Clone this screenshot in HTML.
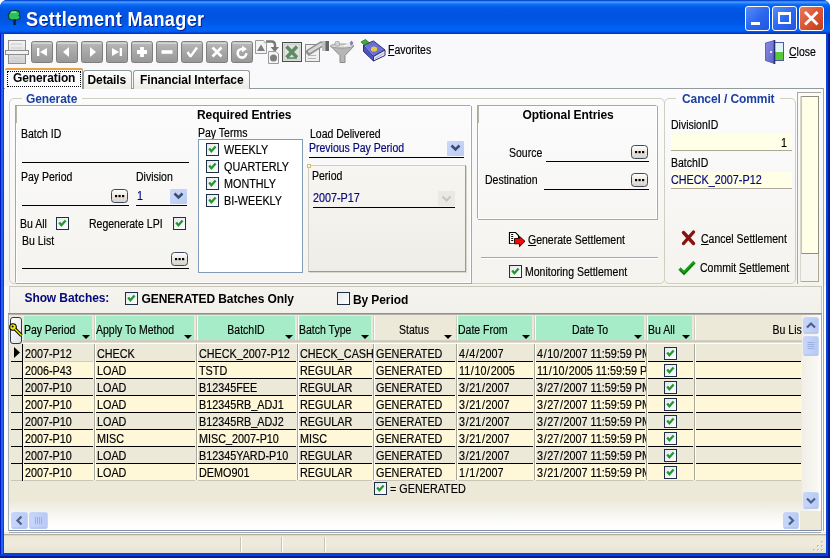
<!DOCTYPE html>
<html><head><meta charset="utf-8"><style>
html,body{margin:0;padding:0;}
body{width:830px;height:558px;overflow:hidden;position:relative;background:#fff;font-family:"Liberation Sans",sans-serif;will-change:transform;}
body div{position:absolute;box-sizing:border-box;}
svg{overflow:visible}
</style></head><body>
<svg width="0" height="0" style="position:absolute"><defs>
<linearGradient id="cbg" x1="0" y1="0" x2="1" y2="1"><stop offset="0" stop-color="#E6E6F0"/><stop offset="1" stop-color="#FFFFFF"/></linearGradient>
<linearGradient id="ebg" x1="0" y1="0" x2="0" y2="1"><stop offset="0" stop-color="#FFFFFF"/><stop offset="1" stop-color="#D6D0C5"/></linearGradient>
<linearGradient id="dbg" x1="0" y1="0" x2="1" y2="1"><stop offset="0" stop-color="#CCD8F8"/><stop offset="1" stop-color="#BACCF4"/></linearGradient>
<linearGradient id="nbg" x1="0" y1="0" x2="0" y2="1"><stop offset="0" stop-color="#D2D2D2"/><stop offset="0.15" stop-color="#B4B4B4"/><stop offset="0.6" stop-color="#A4A4A4"/><stop offset="1" stop-color="#979797"/></linearGradient>
<linearGradient id="hbg" x1="0" y1="0" x2="1" y2="1"><stop offset="0" stop-color="#FFFFFF"/><stop offset="0.6" stop-color="#ECEEF2"/><stop offset="1" stop-color="#DCE2EA"/></linearGradient>
<linearGradient id="sbg" x1="0" y1="0" x2="1" y2="0"><stop offset="0" stop-color="#C8D6FB"/><stop offset="1" stop-color="#B7CAF5"/></linearGradient>
</defs></svg>

<div style="left:0px;top:0px;width:830px;height:558px;background:#0842D6;border-radius:7px 7px 0 0;"></div>
<div style="left:0px;top:0px;width:830px;height:34px;border-radius:7px 7px 0 0;background:linear-gradient(#0846D0 0px,#0A50D8 1px,#3A93FF 1.6px,#3D95FF 2.6px,#1370F6 4px,#0560F0 6px,#0057E6 9px,#0053E0 16px,#0056E6 22px,#0062F6 28px,#0060F4 31px,#0046D4 32.5px,#0030B0 34px);"></div>
<div style="left:0px;top:34px;width:1px;height:524px;background:#0018C0;"></div>
<div style="left:1px;top:34px;width:2px;height:522px;background:#1E62F0;"></div>
<div style="left:826px;top:34px;width:2px;height:522px;background:#0842DA;"></div>
<div style="left:828px;top:34px;width:2px;height:524px;background:#001C98;"></div>
<div style="left:0px;top:554px;width:828px;height:2px;background:#0842DA;"></div>
<div style="left:0px;top:556px;width:830px;height:2px;background:#001C98;"></div>
<div style="left:4px;top:34px;width:822px;height:519px;background:#ECE9D8;"></div>
<div style="left:4px;top:34px;width:822px;height:55px;background:#F9F9FC;"></div>
<svg style="position:absolute;left:6px;top:9px" width="17" height="17" viewBox="0 0 17 17"><path d="M3.5 4 Q4 1.5 8 1.8 Q12.5 1 13.5 3.5 Q14.5 5.5 13 6.5 Q15.5 8.5 12.5 10.5 Q9 11.5 5 10.8 Q2 10 2.8 8 Q1.5 6 3.5 4 Z" fill="#2DBE5E" stroke="#0D3A1E" stroke-width="1.1"/><path d="M5 3.5 Q8 2.5 10.5 3.5" stroke="#6CF09A" stroke-width="1.6" fill="none"/><rect x="7.5" y="10.5" width="2.2" height="5.5" fill="#0A1A3A"/></svg>
<div style="left:26px;top:9.07px;font-size:20px;line-height:20px;font-weight:bold;color:#fff;white-space:nowrap;text-shadow:1px 1px 0 #0A1E8C;letter-spacing:0.4px;transform:scaleX(0.905);transform-origin:0 0;">Settlement Manager</div>
<div style="left:745px;top:6px;width:25px;height:25px;border:1px solid #fff;border-radius:3px;background:linear-gradient(135deg,#5A8DF7,#2D68F0 50%,#2156DD);"></div>
<div style="left:772px;top:6px;width:25px;height:25px;border:1px solid #fff;border-radius:3px;background:linear-gradient(135deg,#5A8DF7,#2D68F0 50%,#2156DD);"></div>
<div style="left:799px;top:6px;width:25px;height:25px;border:1px solid #fff;border-radius:3px;background:linear-gradient(135deg,#E8795E,#D8532F 55%,#C23E1C);"></div>
<div style="left:751px;top:22px;width:9px;height:3px;background:#fff;"></div>
<div style="left:778px;top:12px;width:13px;height:12px;border:2px solid #fff;border-top-width:3px;"></div>
<svg style="position:absolute;left:803px;top:10px" width="17" height="17" viewBox="0 0 17 17"><path d="M2 2 L14.5 14.5 M14.5 2 L2 14.5" stroke="#fff" stroke-width="2.8"/></svg>
<svg style="position:absolute;left:5px;top:40px" width="25" height="24" viewBox="0 0 25 24"><defs><linearGradient id="rsg" x1="0" y1="0" x2="0" y2="1"><stop offset="0" stop-color="#F4F4F4"/><stop offset="1" stop-color="#D0D0D0"/></linearGradient></defs><rect x="3.5" y="0.5" width="17" height="23" fill="url(#rsg)" stroke="#8E8E8E"/><rect x="0.5" y="10.5" width="23" height="4" fill="#F2F2F2" stroke="#8E8E8E"/><path d="M6 4h11M6 8h11M6 18h11M6 21h11" stroke="#CACACA"/></svg>
<svg style="position:absolute;left:31px;top:41px" width="22" height="22" viewBox="0 0 22 22"><rect x="0.5" y="0.5" width="21" height="21" rx="2" fill="url(#nbg)" stroke="#7E7E7E"/><path d="M2 2.5 H20" stroke="#DADADA" stroke-opacity="0.8"/><rect x="6" y="7" width="2.3" height="8" fill="#fff"/><path d="M9 11 L16 7 V15 Z" fill="#fff"/></svg>
<svg style="position:absolute;left:56px;top:41px" width="22" height="22" viewBox="0 0 22 22"><rect x="0.5" y="0.5" width="21" height="21" rx="2" fill="url(#nbg)" stroke="#7E7E7E"/><path d="M2 2.5 H20" stroke="#DADADA" stroke-opacity="0.8"/><path d="M7 11 L13 6 V16 Z" fill="#fff"/></svg>
<svg style="position:absolute;left:81px;top:41px" width="22" height="22" viewBox="0 0 22 22"><rect x="0.5" y="0.5" width="21" height="21" rx="2" fill="url(#nbg)" stroke="#7E7E7E"/><path d="M2 2.5 H20" stroke="#DADADA" stroke-opacity="0.8"/><path d="M15 11 L9 6 V16 Z" fill="#fff"/></svg>
<svg style="position:absolute;left:106px;top:41px" width="22" height="22" viewBox="0 0 22 22"><rect x="0.5" y="0.5" width="21" height="21" rx="2" fill="url(#nbg)" stroke="#7E7E7E"/><path d="M2 2.5 H20" stroke="#DADADA" stroke-opacity="0.8"/><rect x="13.7" y="7" width="2.3" height="8" fill="#fff"/><path d="M13 11 L6 7 V15 Z" fill="#fff"/></svg>
<svg style="position:absolute;left:131px;top:41px" width="22" height="22" viewBox="0 0 22 22"><rect x="0.5" y="0.5" width="21" height="21" rx="2" fill="url(#nbg)" stroke="#7E7E7E"/><path d="M2 2.5 H20" stroke="#DADADA" stroke-opacity="0.8"/><path d="M11 6 V16 M6 11 H16" stroke="#fff" stroke-width="3.8"/></svg>
<svg style="position:absolute;left:156px;top:41px" width="22" height="22" viewBox="0 0 22 22"><rect x="0.5" y="0.5" width="21" height="21" rx="2" fill="url(#nbg)" stroke="#7E7E7E"/><path d="M2 2.5 H20" stroke="#DADADA" stroke-opacity="0.8"/><path d="M5.5 11 H16.5" stroke="#fff" stroke-width="3.6"/></svg>
<svg style="position:absolute;left:181px;top:41px" width="22" height="22" viewBox="0 0 22 22"><rect x="0.5" y="0.5" width="21" height="21" rx="2" fill="url(#nbg)" stroke="#7E7E7E"/><path d="M2 2.5 H20" stroke="#DADADA" stroke-opacity="0.8"/><path d="M6.5 11 L9.5 15.5 L16 6.5" stroke="#fff" stroke-width="2.4" fill="none" stroke-linejoin="bevel"/></svg>
<svg style="position:absolute;left:206px;top:41px" width="22" height="22" viewBox="0 0 22 22"><rect x="0.5" y="0.5" width="21" height="21" rx="2" fill="url(#nbg)" stroke="#7E7E7E"/><path d="M2 2.5 H20" stroke="#DADADA" stroke-opacity="0.8"/><path d="M6.5 6.5 L15.5 15.5 M15.5 6.5 L6.5 15.5" stroke="#fff" stroke-width="2.6"/></svg>
<svg style="position:absolute;left:231px;top:41px" width="22" height="22" viewBox="0 0 22 22"><rect x="0.5" y="0.5" width="21" height="21" rx="2" fill="url(#nbg)" stroke="#7E7E7E"/><path d="M2 2.5 H20" stroke="#DADADA" stroke-opacity="0.8"/><path d="M11 8 A4.3 4.3 0 1 0 15.3 12.3" stroke="#fff" stroke-width="2.6" fill="none"/><path d="M11 4.8 L16 8 L11 11.2 Z" fill="#fff"/></svg>
<svg style="position:absolute;left:255px;top:40px" width="25" height="24" viewBox="0 0 25 24"><path d="M0.5 0.5 H8.5 L11.5 3.5 V13.5 H0.5 Z" fill="#F4F4F4" stroke="#9A9A9A"/><path d="M8.5 0.5 V3.5 H11.5 Z" fill="#D0D0D0"/><path d="M2 11 L6 4.5 L10 11 Z" fill="#7E7E7E"/><path d="M11 1.5 H16.5 Q20 1.5 20 5 V8" stroke="#787878" stroke-width="2.4" fill="none"/><path d="M15.5 7 H24 L19.8 12 Z" fill="#787878"/><path d="M13.5 11.5 H21 L23.5 14 V23.5 H13.5 Z" fill="#F4F4F4" stroke="#9A9A9A"/><circle cx="18.5" cy="18" r="3.5" fill="#7E7E7E"/></svg>
<svg style="position:absolute;left:282px;top:42px" width="20" height="20" viewBox="0 0 20 20"><rect x="0.5" y="0.5" width="19" height="19" fill="#F4F4F2" stroke="#4A4E4A"/><rect x="2" y="2" width="16" height="16" fill="#E0E3DF" stroke="#BFC4BE"/><path d="M4.5 4.5 L15 15.5 M15 4.5 L4.5 15.5" stroke="#5F8A66" stroke-width="3.4"/><path d="M5 16 H15" stroke="#5F8A66" stroke-width="1.6"/></svg>
<svg style="position:absolute;left:304px;top:40px" width="26" height="24" viewBox="0 0 26 24"><rect x="1.5" y="4.5" width="14" height="17" fill="#EFEFEF" stroke="#888"/><path d="M4 15.5h8M4 18.5h8" stroke="#B4B4B4"/><path d="M5 12 L17 4.5" stroke="#8E8E8E" stroke-width="6" stroke-linecap="round"/><path d="M5.5 11.5 L17 4.5" stroke="#D6D6D6" stroke-width="3" stroke-linecap="round"/><rect x="18" y="1" width="7" height="10" fill="#BDBDBD"/><rect x="21.5" y="1" width="3.5" height="10" fill="#666"/></svg>
<svg style="position:absolute;left:330px;top:40px" width="26" height="24" viewBox="0 0 26 24"><path d="M0.5 6 H24 L15 15.5 V22.5 H10 V15.5 Z" fill="#B6B6B6" stroke="#8A8A8A"/><ellipse cx="12.2" cy="6" rx="11.7" ry="2" fill="#DEDEDE" stroke="#9A9A9A"/><rect x="5" y="1.5" width="4.5" height="4.5" rx="1.5" fill="#D4D4D4" stroke="#A0A0A0" stroke-width="0.8"/><path d="M14 6 L20 4" stroke="#F4F4F4" stroke-width="1.5"/><path d="M21.5 0.5 L23.5 3 L21.5 5.5 L19.5 3 Z" fill="#8A7CC0"/></svg>
<svg style="position:absolute;left:356px;top:34px" width="34" height="32" viewBox="0 0 34 32"><path d="M7.5 11 L17.5 7 L29 16 L17.5 22.5 Z" fill="#6B6FD6" stroke="#2C2F80" stroke-width="1"/><path d="M7.5 11 L17.5 22.5 L17.5 27 L7.5 17.5 Z" fill="#5155BE" stroke="#2C2F80" stroke-width="1"/><path d="M17.5 22.5 L29 16 L29 21.5 L17.5 27 Z" fill="#E4E4EE" stroke="#2C2F80" stroke-width="1"/><path d="M19 24.5 L27.5 19.5" stroke="#B0B0C8"/><path d="M5 8 L9.5 5.5 L13 8.5 L8.5 11 Z" fill="#3BB03B" stroke="#1E6E1E" stroke-width="0.8"/><ellipse cx="18" cy="15" rx="3.2" ry="2.6" fill="#E8C840"/><path d="M9 12 L17 21" stroke="#8D91E8" stroke-width="1"/></svg>
<div style="left:388.3px;top:43.84px;font-size:12px;line-height:12px;font-weight:normal;color:#000;white-space:nowrap;transform:scaleX(0.875);transform-origin:0 0;-webkit-text-stroke:0.18px currentColor;"><u>F</u>avorites</div>
<svg style="position:absolute;left:765px;top:40px" width="20" height="24" viewBox="0 0 20 24"><defs><linearGradient id="drg" x1="0" y1="0" x2="1" y2="1"><stop offset="0" stop-color="#8A8CE8"/><stop offset="1" stop-color="#5E62C8"/></linearGradient></defs><rect x="9.5" y="2.5" width="9" height="18" fill="#DDF4FA" stroke="#4E5AA0"/><rect x="10" y="12" width="8" height="8" fill="#58C83A"/><path d="M0.5 3 L9.5 0.5 V23.5 L0.5 20.5 Z" fill="url(#drg)" stroke="#4A50A8" stroke-width="0.8"/><path d="M9.5 0 V24" stroke="#283070" stroke-width="1.6"/><circle cx="6" cy="12" r="1.1" fill="#fff"/></svg>
<div style="left:789.3px;top:45.64px;font-size:12px;line-height:12px;font-weight:normal;color:#000;white-space:nowrap;transform:scaleX(0.875);transform-origin:0 0;-webkit-text-stroke:0.18px currentColor;"><u>C</u>lose</div>
<div style="left:4px;top:88px;width:822px;height:226px;background:linear-gradient(#FCFCFE,#F4F3EE 200px,#F1F0EA);"></div>
<div style="left:4px;top:88px;width:820px;height:1px;background:#919B9C;"></div>
<div style="left:83px;top:70px;width:49px;height:19px;border:1px solid #919B9C;border-bottom:none;border-radius:3px 3px 0 0;background:linear-gradient(#FFFFFF,#ECEBE6);"></div>
<div style="left:133px;top:70px;width:117px;height:19px;border:1px solid #919B9C;border-bottom:none;border-radius:3px 3px 0 0;background:linear-gradient(#FFFFFF,#ECEBE6);"></div>
<div style="left:5px;top:68px;width:78px;height:21px;border-right:1px solid #919B9C;border-radius:3px 3px 0 0;background:#FCFCFE;"></div>
<div style="left:5px;top:68px;width:78px;height:2px;background:#E8A040;border-radius:2px 2px 0 0;"></div>
<div style="left:7px;top:71px;width:74px;height:16px;border:1px dotted #000;"></div>
<div style="left:13px;top:71.84px;font-size:12px;line-height:12px;font-weight:bold;color:#000;white-space:nowrap;letter-spacing:-0.1px;">Generation</div>
<div style="left:87.5px;top:73.84px;font-size:12px;line-height:12px;font-weight:bold;color:#000;white-space:nowrap;letter-spacing:-0.1px;">Details</div>
<div style="left:140px;top:73.84px;font-size:12px;line-height:12px;font-weight:bold;color:#000;white-space:nowrap;letter-spacing:-0.1px;">Financial Interface</div>
<div style="left:9px;top:98px;width:656px;height:186px;border:1px solid #D0D0BF;border-radius:5px;"></div>
<div style="left:22px;top:90px;width:60px;height:14px;background:#FCFCFE;"></div>
<div style="left:26px;top:92.84px;font-size:12px;line-height:12px;font-weight:bold;color:#1A3FA0;white-space:nowrap;letter-spacing:-0.1px;">Generate</div>
<div style="left:15px;top:105px;width:456px;height:178px;border:1px solid #ACA899;border-right-color:#fff;border-bottom-color:#fff;box-shadow:1px 1px 0 #ACA899, inset 1px 1px 0 #fff;"></div>
<div style="left:16px;top:106px;width:1px;height:17px;background:#B8B4A6;"></div>
<div style="left:197px;top:108.84px;font-size:12px;line-height:12px;font-weight:bold;color:#000;white-space:nowrap;letter-spacing:-0.1px;">Required Entries</div>
<div style="left:21.3px;top:127.84px;font-size:12px;line-height:12px;font-weight:normal;color:#000;white-space:nowrap;transform:scaleX(0.875);transform-origin:0 0;-webkit-text-stroke:0.18px currentColor;">Batch ID</div>
<div style="left:22px;top:162px;width:167px;height:1px;background:#000;"></div>
<div style="left:20.8px;top:170.84px;font-size:12px;line-height:12px;font-weight:normal;color:#000;white-space:nowrap;transform:scaleX(0.875);transform-origin:0 0;-webkit-text-stroke:0.18px currentColor;">Pay Period</div>
<div style="left:136.3px;top:170.84px;font-size:12px;line-height:12px;font-weight:normal;color:#000;white-space:nowrap;transform:scaleX(0.875);transform-origin:0 0;-webkit-text-stroke:0.18px currentColor;">Division</div>
<svg style="position:absolute;left:111px;top:189px" width="17" height="14" viewBox="0 0 17 14"><rect x="0.5" y="0.5" width="16" height="13" rx="3" fill="url(#ebg)" stroke="#3A4A5C"/><rect x="4.0" y="6.0" width="2.2" height="2.2" fill="#000"/><rect x="7.5" y="6.0" width="2.2" height="2.2" fill="#000"/><rect x="11.0" y="6.0" width="2.2" height="2.2" fill="#000"/></svg>
<div style="left:22px;top:205px;width:107px;height:1px;background:#000;"></div>
<div style="left:137.3px;top:189.84px;font-size:12px;line-height:12px;font-weight:normal;color:#06087A;white-space:nowrap;transform:scaleX(0.9);transform-origin:0 0;-webkit-text-stroke:0.18px currentColor;">1</div>
<svg style="position:absolute;left:170px;top:189px" width="17" height="15" viewBox="0 0 17 15"><rect x="0" y="0" width="17" height="15" rx="1" fill="url(#dbg)"/><path d="M4.5 4.5 L8.5 8.5 L12.5 4.5" stroke="#3C4C74" stroke-width="2.5" fill="none"/></svg>
<div style="left:136px;top:205px;width:51px;height:1px;background:#000;"></div>
<div style="left:19.8px;top:218.34px;font-size:12px;line-height:12px;font-weight:normal;color:#000;white-space:nowrap;transform:scaleX(0.875);transform-origin:0 0;-webkit-text-stroke:0.18px currentColor;">Bu All</div>
<svg style="position:absolute;left:56px;top:217px" width="13" height="13" viewBox="0 0 13 13"><rect x="0.5" y="0.5" width="12" height="12" fill="url(#cbg)" stroke="#1E2E44"/><path d="M3.2 5.6 L5.4 8.3 L9.6 3.6" stroke="#21982A" stroke-width="2.3" fill="none"/></svg>
<div style="left:89.3px;top:218.34px;font-size:12px;line-height:12px;font-weight:normal;color:#000;white-space:nowrap;transform:scaleX(0.875);transform-origin:0 0;-webkit-text-stroke:0.18px currentColor;">Regenerate LPI</div>
<svg style="position:absolute;left:173px;top:217px" width="13" height="13" viewBox="0 0 13 13"><rect x="0.5" y="0.5" width="12" height="12" fill="url(#cbg)" stroke="#1E2E44"/><path d="M3.2 5.6 L5.4 8.3 L9.6 3.6" stroke="#21982A" stroke-width="2.3" fill="none"/></svg>
<div style="left:21.8px;top:235.34px;font-size:12px;line-height:12px;font-weight:normal;color:#000;white-space:nowrap;transform:scaleX(0.875);transform-origin:0 0;-webkit-text-stroke:0.18px currentColor;">Bu List</div>
<svg style="position:absolute;left:171px;top:252px" width="17" height="14" viewBox="0 0 17 14"><rect x="0.5" y="0.5" width="16" height="13" rx="3" fill="url(#ebg)" stroke="#3A4A5C"/><rect x="4.0" y="6.0" width="2.2" height="2.2" fill="#000"/><rect x="7.5" y="6.0" width="2.2" height="2.2" fill="#000"/><rect x="11.0" y="6.0" width="2.2" height="2.2" fill="#000"/></svg>
<div style="left:22px;top:268px;width:167px;height:1px;background:#000;"></div>
<div style="left:197.8px;top:127.34px;font-size:12px;line-height:12px;font-weight:normal;color:#000;white-space:nowrap;transform:scaleX(0.875);transform-origin:0 0;-webkit-text-stroke:0.18px currentColor;">Pay Terms</div>
<div style="left:198px;top:139px;width:105px;height:134px;border:1px solid #7F9DB9;background:#fff;"></div>
<svg style="position:absolute;left:206px;top:143px" width="13" height="13" viewBox="0 0 13 13"><rect x="0.5" y="0.5" width="12" height="12" fill="url(#cbg)" stroke="#1E2E44"/><path d="M3.2 5.6 L5.4 8.3 L9.6 3.6" stroke="#21982A" stroke-width="2.3" fill="none"/></svg>
<div style="left:224.3px;top:143.84px;font-size:12px;line-height:12px;font-weight:normal;color:#000;white-space:nowrap;transform:scaleX(0.9);transform-origin:0 0;-webkit-text-stroke:0.18px currentColor;">WEEKLY</div>
<svg style="position:absolute;left:206px;top:160px" width="13" height="13" viewBox="0 0 13 13"><rect x="0.5" y="0.5" width="12" height="12" fill="url(#cbg)" stroke="#1E2E44"/><path d="M3.2 5.6 L5.4 8.3 L9.6 3.6" stroke="#21982A" stroke-width="2.3" fill="none"/></svg>
<div style="left:224.3px;top:160.84px;font-size:12px;line-height:12px;font-weight:normal;color:#000;white-space:nowrap;transform:scaleX(0.9);transform-origin:0 0;-webkit-text-stroke:0.18px currentColor;">QUARTERLY</div>
<svg style="position:absolute;left:206px;top:177px" width="13" height="13" viewBox="0 0 13 13"><rect x="0.5" y="0.5" width="12" height="12" fill="url(#cbg)" stroke="#1E2E44"/><path d="M3.2 5.6 L5.4 8.3 L9.6 3.6" stroke="#21982A" stroke-width="2.3" fill="none"/></svg>
<div style="left:224.3px;top:177.84px;font-size:12px;line-height:12px;font-weight:normal;color:#000;white-space:nowrap;transform:scaleX(0.9);transform-origin:0 0;-webkit-text-stroke:0.18px currentColor;">MONTHLY</div>
<svg style="position:absolute;left:206px;top:194px" width="13" height="13" viewBox="0 0 13 13"><rect x="0.5" y="0.5" width="12" height="12" fill="url(#cbg)" stroke="#1E2E44"/><path d="M3.2 5.6 L5.4 8.3 L9.6 3.6" stroke="#21982A" stroke-width="2.3" fill="none"/></svg>
<div style="left:224.3px;top:194.84px;font-size:12px;line-height:12px;font-weight:normal;color:#000;white-space:nowrap;transform:scaleX(0.9);transform-origin:0 0;-webkit-text-stroke:0.18px currentColor;">BI-WEEKLY</div>
<div style="left:309.8px;top:127.84px;font-size:12px;line-height:12px;font-weight:normal;color:#000;white-space:nowrap;transform:scaleX(0.875);transform-origin:0 0;-webkit-text-stroke:0.18px currentColor;">Load Delivered</div>
<div style="left:308.8px;top:141.84px;font-size:12px;line-height:12px;font-weight:normal;color:#06087A;white-space:nowrap;transform:scaleX(0.875);transform-origin:0 0;-webkit-text-stroke:0.18px currentColor;">Previous Pay Period</div>
<svg style="position:absolute;left:447px;top:141px" width="17" height="15" viewBox="0 0 17 15"><rect x="0" y="0" width="17" height="15" rx="1" fill="url(#dbg)"/><path d="M4.5 4.5 L8.5 8.5 L12.5 4.5" stroke="#3C4C74" stroke-width="2.5" fill="none"/></svg>
<div style="left:309px;top:157px;width:155px;height:1px;background:#000;"></div>
<div style="left:308px;top:165px;width:158px;height:107px;border:1px solid #CFCDC3;border-right-color:#9C9A90;border-bottom-color:#9C9A90;box-shadow:1px 1px 0 #DAD8CE;background:linear-gradient(#F7F6F2,#EEEDE7);"></div>
<div style="left:307px;top:164px;width:4px;height:4px;border:1px solid #D9B878;background:#FFF8E8;"></div>
<div style="left:312.3px;top:169.84px;font-size:12px;line-height:12px;font-weight:normal;color:#000;white-space:nowrap;transform:scaleX(0.875);transform-origin:0 0;-webkit-text-stroke:0.18px currentColor;">Period</div>
<div style="left:312.8px;top:191.84px;font-size:12px;line-height:12px;font-weight:normal;color:#06087A;white-space:nowrap;transform:scaleX(0.9);transform-origin:0 0;-webkit-text-stroke:0.18px currentColor;">2007-P17</div>
<svg style="position:absolute;left:438px;top:191px" width="17" height="15" viewBox="0 0 17 15"><rect x="0" y="0" width="17" height="15" rx="1" fill="#EAEAE4" stroke="none"/><path d="M4.5 5.5 L8.5 9.5 L12.5 5.5" stroke="#C9C7BA" stroke-width="2" fill="none"/></svg>
<div style="left:313px;top:207px;width:142px;height:1px;background:#000;"></div>
<div style="left:477px;top:105px;width:180px;height:114px;border:1px solid #ACA899;border-right-color:#fff;border-bottom-color:#fff;box-shadow:1px 1px 0 #ACA899, inset 1px 1px 0 #fff;"></div>
<div style="left:478px;top:106px;width:1px;height:17px;background:#B8B4A6;"></div>
<div style="left:522.5px;top:108.84px;font-size:12px;line-height:12px;font-weight:bold;color:#000;white-space:nowrap;letter-spacing:-0.1px;">Optional Entries</div>
<div style="left:509.3px;top:146.84px;font-size:12px;line-height:12px;font-weight:normal;color:#000;white-space:nowrap;transform:scaleX(0.875);transform-origin:0 0;-webkit-text-stroke:0.18px currentColor;">Source</div>
<div style="left:546px;top:161px;width:103px;height:1px;background:#000;"></div>
<svg style="position:absolute;left:631px;top:145px" width="17" height="14" viewBox="0 0 17 14"><rect x="0.5" y="0.5" width="16" height="13" rx="3" fill="url(#ebg)" stroke="#3A4A5C"/><rect x="4.0" y="6.0" width="2.2" height="2.2" fill="#000"/><rect x="7.5" y="6.0" width="2.2" height="2.2" fill="#000"/><rect x="11.0" y="6.0" width="2.2" height="2.2" fill="#000"/></svg>
<div style="left:485.3px;top:174.34px;font-size:12px;line-height:12px;font-weight:normal;color:#000;white-space:nowrap;transform:scaleX(0.875);transform-origin:0 0;-webkit-text-stroke:0.18px currentColor;">Destination</div>
<div style="left:544px;top:189px;width:105px;height:1px;background:#000;"></div>
<svg style="position:absolute;left:631px;top:173px" width="17" height="14" viewBox="0 0 17 14"><rect x="0.5" y="0.5" width="16" height="13" rx="3" fill="url(#ebg)" stroke="#3A4A5C"/><rect x="4.0" y="6.0" width="2.2" height="2.2" fill="#000"/><rect x="7.5" y="6.0" width="2.2" height="2.2" fill="#000"/><rect x="11.0" y="6.0" width="2.2" height="2.2" fill="#000"/></svg>
<svg style="position:absolute;left:504px;top:228px" width="26" height="24" viewBox="0 0 26 24"><path d="M10.5 15.5 H5.5 V4.5 H11.5 L14.5 7.5 V10" fill="#fff" stroke="#000" stroke-width="1.2"/><rect x="6.3" y="5.3" width="5" height="10" fill="#fff"/><path d="M7.2 6.5h2M7.2 8.5h2M7.2 10.5h2M7.2 12.5h2" stroke="#000" stroke-width="1.1"/><path d="M10.5 10.5 H15.5 V8.3 L21 13.3 L15.5 18.7 V15.8 H10.5 Z" fill="#F00A0A" stroke="#1A0000" stroke-width="0.9"/></svg>
<div style="left:528.3px;top:233.84px;font-size:12px;line-height:12px;font-weight:normal;color:#000;white-space:nowrap;transform:scaleX(0.875);transform-origin:0 0;-webkit-text-stroke:0.18px currentColor;"><u>G</u>enerate Settlement</div>
<div style="left:481px;top:257px;width:177px;height:1px;background:#ACA899;"></div>
<div style="left:481px;top:258px;width:177px;height:1px;background:#fff;"></div>
<svg style="position:absolute;left:509px;top:265px" width="13" height="13" viewBox="0 0 13 13"><rect x="0.5" y="0.5" width="12" height="12" fill="url(#cbg)" stroke="#1E2E44"/><path d="M3.2 5.6 L5.4 8.3 L9.6 3.6" stroke="#21982A" stroke-width="2.3" fill="none"/></svg>
<div style="left:525.3px;top:265.84px;font-size:12px;line-height:12px;font-weight:normal;color:#000;white-space:nowrap;transform:scaleX(0.875);transform-origin:0 0;-webkit-text-stroke:0.18px currentColor;">Monitoring Settlement</div>
<div style="left:664px;top:98px;width:132px;height:186px;border:1px solid #D0D0BF;border-radius:5px;"></div>
<div style="left:676px;top:90px;width:104px;height:14px;background:#FCFCFE;"></div>
<div style="left:682px;top:92.84px;font-size:12px;line-height:12px;font-weight:bold;color:#1A3FA0;white-space:nowrap;letter-spacing:-0.1px;">Cancel / Commit</div>
<div style="left:670.8px;top:118.84px;font-size:12px;line-height:12px;font-weight:normal;color:#000;white-space:nowrap;transform:scaleX(0.875);transform-origin:0 0;-webkit-text-stroke:0.18px currentColor;">DivisionID</div>
<div style="left:671px;top:134px;width:121px;height:17px;background:#FFFFE8;border-bottom:1px solid #ACA899;"></div>
<div style="left:757.3px;width:30px;text-align:right;top:136.84px;font-size:12px;line-height:12px;font-weight:normal;color:#000;white-space:nowrap;transform:scaleX(0.9);transform-origin:100% 0;-webkit-text-stroke:0.18px currentColor;">1</div>
<div style="left:670.8px;top:156.84px;font-size:12px;line-height:12px;font-weight:normal;color:#000;white-space:nowrap;transform:scaleX(0.875);transform-origin:0 0;-webkit-text-stroke:0.18px currentColor;">BatchID</div>
<div style="left:671px;top:172px;width:121px;height:17px;background:#FFFFE8;border-bottom:1px solid #ACA899;"></div>
<div style="left:671.3px;top:174.34px;font-size:12px;line-height:12px;font-weight:normal;color:#06087A;white-space:nowrap;transform:scaleX(0.9);transform-origin:0 0;-webkit-text-stroke:0.18px currentColor;">CHECK_2007-P12</div>
<svg style="position:absolute;left:681px;top:230px" width="15" height="16" viewBox="0 0 15 16"><path d="M2.5 2.5 L12.5 13.5 M12.5 2 L2.5 13.5" stroke="#8B1010" stroke-width="3.4" stroke-linecap="round"/></svg>
<div style="left:700.8px;top:232.84px;font-size:12px;line-height:12px;font-weight:normal;color:#000;white-space:nowrap;transform:scaleX(0.875);transform-origin:0 0;-webkit-text-stroke:0.18px currentColor;"><u>C</u>ancel Settlement</div>
<svg style="position:absolute;left:678px;top:260px" width="18" height="15" viewBox="0 0 18 15"><path d="M1.5 8.5 L6 13 L16.5 2" stroke="#18A018" stroke-width="3.4" fill="none"/><path d="M2 10 L6 14 L16 3.5" stroke="#0A5F0A" stroke-width="1" fill="none"/></svg>
<div style="left:699.8px;top:262.34px;font-size:12px;line-height:12px;font-weight:normal;color:#000;white-space:nowrap;transform:scaleX(0.875);transform-origin:0 0;-webkit-text-stroke:0.18px currentColor;">Commit <u>S</u>ettlement</div>
<div style="left:797px;top:92px;width:24px;height:1px;background:#ACA899;"></div>
<div style="left:797px;top:92px;width:1px;height:192px;background:#ACA899;"></div>
<div style="left:800px;top:281px;width:19px;height:1px;background:#ACA899;"></div>
<div style="left:818px;top:96px;width:1px;height:186px;background:#ACA899;"></div>
<div style="left:800px;top:96px;width:1px;height:186px;background:#D8D6CC;"></div>
<div style="left:801px;top:96px;width:18px;height:158px;border-top:1px solid #8E8E86;border-left:1px solid #C8C6BC;border-bottom:1px solid #8E8E86;border-right:1px solid #8E8E86;background:#FFFFE8;"></div>
<div style="left:4px;top:286px;width:5px;height:247px;background:#FBFBF9;"></div>
<div style="left:821px;top:286px;width:5px;height:247px;background:#FBFBF9;"></div>
<div style="left:823px;top:88px;width:1px;height:445px;background:#A9A79C;"></div>
<div style="left:9px;top:286px;width:813px;height:28px;border-top:1px solid #C9C7BA;border-left:1px solid #D0D0BF;border-right:1px solid #C9C7BA;background:linear-gradient(#F4F3EE,#F1F0EA);"></div>
<div style="left:24.5px;top:292.34px;font-size:12px;line-height:12px;font-weight:bold;color:#06087A;white-space:nowrap;letter-spacing:-0.1px;">Show Batches:</div>
<svg style="position:absolute;left:125px;top:292px" width="13" height="13" viewBox="0 0 13 13"><rect x="0.5" y="0.5" width="12" height="12" fill="url(#cbg)" stroke="#1E2E44"/><path d="M3.2 5.6 L5.4 8.3 L9.6 3.6" stroke="#21982A" stroke-width="2.3" fill="none"/></svg>
<div style="left:141.5px;top:292.84px;font-size:12px;line-height:12px;font-weight:bold;color:#000;white-space:nowrap;letter-spacing:-0.1px;">GENERATED Batches Only</div>
<svg style="position:absolute;left:337px;top:292px" width="13" height="13" viewBox="0 0 13 13"><rect x="0.5" y="0.5" width="12" height="12" fill="url(#cbg)" stroke="#1E2E44"/></svg>
<div style="left:353px;top:293.84px;font-size:12px;line-height:12px;font-weight:bold;color:#000;white-space:nowrap;letter-spacing:-0.1px;">By Period</div>
<div style="left:8px;top:313px;width:814px;height:218px;border-left:1px solid #A5ADB8;border-right:1px solid #A5ADB8;border-bottom:1px solid #A5ADB8;background:#ECE9D8;"></div>
<div style="left:8px;top:313px;width:814px;height:1px;background:#8F8F8F;"></div>
<div style="left:8px;top:314px;width:814px;height:1px;background:#B4B2A8;"></div>
<div style="left:9px;top:530px;width:812px;height:1px;background:#7F8FA8;"></div>
<div style="left:9px;top:315px;width:793px;height:26px;background:#ECE9D8;"></div>
<svg style="position:absolute;left:10px;top:317px" width="12" height="27" viewBox="0 0 12 27"><rect x="0.5" y="0.5" width="11" height="26" rx="2.5" fill="url(#hbg)" stroke="#2E3A48"/></svg>
<svg style="position:absolute;left:8px;top:322px" width="16" height="16" viewBox="0 0 16 16"><circle cx="5" cy="5" r="3.3" fill="#F4EC10" stroke="#000" stroke-width="1.1"/><circle cx="4.6" cy="4.6" r="1" fill="#000"/><path d="M7 7 L13.5 13.5" stroke="#000" stroke-width="3.2"/><path d="M7 7 L13.5 13.5" stroke="#F4EC10" stroke-width="1.4"/></svg>
<div style="left:23.5px;top:316px;width:68.5px;height:24px;background:#A7ECC8;"></div>
<div style="left:24.3px;top:323.84px;font-size:12px;line-height:12px;font-weight:normal;color:#000;white-space:nowrap;transform:scaleX(0.875);transform-origin:0 0;-webkit-text-stroke:0.18px currentColor;">Pay Period</div>
<svg style="position:absolute;left:82px;top:335px" width="8" height="5" viewBox="0 0 8 5"><path d="M0 0 H8 L4 4 Z" fill="#000"/></svg>
<div style="left:95.5px;top:316px;width:98.5px;height:24px;background:#A7ECC8;"></div>
<div style="left:94px;top:316px;width:1px;height:24px;background:#CFCBBE;"></div>
<div style="left:95px;top:316px;width:1px;height:24px;background:#FFFFFF;"></div>
<div style="left:96.3px;top:323.84px;font-size:12px;line-height:12px;font-weight:normal;color:#000;white-space:nowrap;transform:scaleX(0.875);transform-origin:0 0;-webkit-text-stroke:0.18px currentColor;">Apply To Method</div>
<svg style="position:absolute;left:184px;top:335px" width="8" height="5" viewBox="0 0 8 5"><path d="M0 0 H8 L4 4 Z" fill="#000"/></svg>
<div style="left:197.5px;top:316px;width:97.5px;height:24px;background:#A7ECC8;"></div>
<div style="left:196px;top:316px;width:1px;height:24px;background:#CFCBBE;"></div>
<div style="left:197px;top:316px;width:1px;height:24px;background:#FFFFFF;"></div>
<div style="left:196.3px;width:100px;text-align:center;top:323.84px;font-size:12px;line-height:12px;font-weight:normal;color:#000;white-space:nowrap;transform:scaleX(0.875);transform-origin:50% 0;-webkit-text-stroke:0.18px currentColor;">BatchID</div>
<svg style="position:absolute;left:285px;top:335px" width="8" height="5" viewBox="0 0 8 5"><path d="M0 0 H8 L4 4 Z" fill="#000"/></svg>
<div style="left:298.5px;top:316px;width:72.5px;height:24px;background:#A7ECC8;"></div>
<div style="left:297px;top:316px;width:1px;height:24px;background:#CFCBBE;"></div>
<div style="left:298px;top:316px;width:1px;height:24px;background:#FFFFFF;"></div>
<div style="left:299.3px;top:323.84px;font-size:12px;line-height:12px;font-weight:normal;color:#000;white-space:nowrap;transform:scaleX(0.875);transform-origin:0 0;-webkit-text-stroke:0.18px currentColor;">Batch Type</div>
<svg style="position:absolute;left:361px;top:335px" width="8" height="5" viewBox="0 0 8 5"><path d="M0 0 H8 L4 4 Z" fill="#000"/></svg>
<div style="left:373px;top:316px;width:1px;height:24px;background:#CFCBBE;"></div>
<div style="left:374px;top:316px;width:1px;height:24px;background:#FFFFFF;"></div>
<div style="left:364.3px;width:100px;text-align:center;top:323.84px;font-size:12px;line-height:12px;font-weight:normal;color:#000;white-space:nowrap;transform:scaleX(0.875);transform-origin:50% 0;-webkit-text-stroke:0.18px currentColor;">Status</div>
<svg style="position:absolute;left:444px;top:335px" width="8" height="5" viewBox="0 0 8 5"><path d="M0 0 H8 L4 4 Z" fill="#000"/></svg>
<div style="left:457.5px;top:316px;width:74.5px;height:24px;background:#A7ECC8;"></div>
<div style="left:456px;top:316px;width:1px;height:24px;background:#CFCBBE;"></div>
<div style="left:457px;top:316px;width:1px;height:24px;background:#FFFFFF;"></div>
<div style="left:458.3px;top:323.84px;font-size:12px;line-height:12px;font-weight:normal;color:#000;white-space:nowrap;transform:scaleX(0.875);transform-origin:0 0;-webkit-text-stroke:0.18px currentColor;">Date From</div>
<svg style="position:absolute;left:522px;top:335px" width="8" height="5" viewBox="0 0 8 5"><path d="M0 0 H8 L4 4 Z" fill="#000"/></svg>
<div style="left:535.5px;top:316px;width:108.5px;height:24px;background:#A7ECC8;"></div>
<div style="left:534px;top:316px;width:1px;height:24px;background:#CFCBBE;"></div>
<div style="left:535px;top:316px;width:1px;height:24px;background:#FFFFFF;"></div>
<div style="left:539.8px;width:100px;text-align:center;top:323.84px;font-size:12px;line-height:12px;font-weight:normal;color:#000;white-space:nowrap;transform:scaleX(0.875);transform-origin:50% 0;-webkit-text-stroke:0.18px currentColor;">Date To</div>
<svg style="position:absolute;left:634px;top:335px" width="8" height="5" viewBox="0 0 8 5"><path d="M0 0 H8 L4 4 Z" fill="#000"/></svg>
<div style="left:647.5px;top:316px;width:44.5px;height:24px;background:#A7ECC8;"></div>
<div style="left:646px;top:316px;width:1px;height:24px;background:#CFCBBE;"></div>
<div style="left:647px;top:316px;width:1px;height:24px;background:#FFFFFF;"></div>
<div style="left:648.3px;top:323.84px;font-size:12px;line-height:12px;font-weight:normal;color:#000;white-space:nowrap;transform:scaleX(0.875);transform-origin:0 0;-webkit-text-stroke:0.18px currentColor;">Bu All</div>
<svg style="position:absolute;left:682px;top:335px" width="8" height="5" viewBox="0 0 8 5"><path d="M0 0 H8 L4 4 Z" fill="#000"/></svg>
<div style="left:694px;top:316px;width:1px;height:24px;background:#CFCBBE;"></div>
<div style="left:695px;top:316px;width:1px;height:24px;background:#FFFFFF;"></div>
<div style="left:696px;top:321.84px;width:106px;height:16px;overflow:hidden;"><div style="right:-3px;top:2px;font-size:12px;line-height:12px;white-space:nowrap;transform:scaleX(0.875);transform-origin:100% 0;-webkit-text-stroke:0.18px currentColor;">Bu List</div></div>
<div style="left:23px;top:340px;width:779px;height:4px;background:linear-gradient(#D6D2C4,#C8C4B5 50%,#FFFFFF 80%);"></div>
<div style="left:23px;top:344px;width:779px;height:17px;background:#ECE9D8;"></div>
<div style="left:23px;top:361px;width:779px;height:17px;background:#FEF7D8;"></div>
<div style="left:23px;top:378px;width:779px;height:17px;background:#ECE9D8;"></div>
<div style="left:23px;top:395px;width:779px;height:17px;background:#FEF7D8;"></div>
<div style="left:23px;top:412px;width:779px;height:17px;background:#ECE9D8;"></div>
<div style="left:23px;top:429px;width:779px;height:17px;background:#FEF7D8;"></div>
<div style="left:23px;top:446px;width:779px;height:17px;background:#ECE9D8;"></div>
<div style="left:23px;top:463px;width:779px;height:17px;background:#FEF7D8;"></div>
<div style="left:11px;top:361px;width:11px;height:1px;background:#000;"></div>
<div style="left:24px;top:361px;width:69px;height:1px;background:#CFCBBE;"></div>
<div style="left:25px;top:345.84px;width:69px;height:16px;overflow:hidden;"><div style="left:0;top:2px;font-size:12px;line-height:12px;white-space:nowrap;color:#000;transform:scaleX(0.9);transform-origin:0 0;-webkit-text-stroke:0.18px currentColor;">2007-P12</div></div>
<div style="left:96px;top:361px;width:99px;height:1px;background:#000;"></div>
<div style="left:97px;top:345.84px;width:99px;height:16px;overflow:hidden;"><div style="left:0;top:2px;font-size:12px;line-height:12px;white-space:nowrap;color:#000;transform:scaleX(0.9);transform-origin:0 0;-webkit-text-stroke:0.18px currentColor;">CHECK</div></div>
<div style="left:198px;top:361px;width:98px;height:1px;background:#000;"></div>
<div style="left:199px;top:345.84px;width:98px;height:16px;overflow:hidden;"><div style="left:0;top:2px;font-size:12px;line-height:12px;white-space:nowrap;color:#000;transform:scaleX(0.9);transform-origin:0 0;-webkit-text-stroke:0.18px currentColor;">CHECK<span style="position:relative;top:-1px">_</span>2007-P12</div></div>
<div style="left:299px;top:361px;width:73px;height:1px;background:#000;"></div>
<div style="left:300px;top:345.84px;width:73px;height:16px;overflow:hidden;"><div style="left:0;top:2px;font-size:12px;line-height:12px;white-space:nowrap;color:#000;transform:scaleX(0.9);transform-origin:0 0;-webkit-text-stroke:0.18px currentColor;">CHECK<span style="position:relative;top:-1px">_</span>CASH</div></div>
<div style="left:375px;top:361px;width:80px;height:1px;background:#000;"></div>
<div style="left:376px;top:345.84px;width:80px;height:16px;overflow:hidden;"><div style="left:0;top:2px;font-size:12px;line-height:12px;white-space:nowrap;color:#000;transform:scaleX(0.9);transform-origin:0 0;-webkit-text-stroke:0.18px currentColor;">GENERATED</div></div>
<div style="left:458px;top:361px;width:75px;height:1px;background:#000;"></div>
<div style="left:459px;top:345.84px;width:75px;height:16px;overflow:hidden;"><div style="left:0;top:2px;font-size:12px;line-height:12px;white-space:nowrap;color:#000;transform:scaleX(0.9);transform-origin:0 0;-webkit-text-stroke:0.18px currentColor;">4<span style="padding:0 0.7px">/</span>4<span style="padding:0 0.7px">/</span>2007</div></div>
<div style="left:536px;top:361px;width:109px;height:1px;background:#000;"></div>
<div style="left:537px;top:345.84px;width:109px;height:16px;overflow:hidden;"><div style="left:0;top:2px;font-size:12px;line-height:12px;white-space:nowrap;color:#000;transform:scaleX(0.9);transform-origin:0 0;-webkit-text-stroke:0.18px currentColor;">4<span style="padding:0 0.7px">/</span>10<span style="padding:0 0.7px">/</span>2007 11:59:59 PM</div></div>
<div style="left:648px;top:361px;width:45px;height:1px;background:#000;"></div>
<div style="left:696px;top:361px;width:105px;height:1px;background:#000;"></div>
<svg style="position:absolute;left:664px;top:347px" width="13" height="13" viewBox="0 0 13 13"><rect x="0.5" y="0.5" width="12" height="12" fill="url(#cbg)" stroke="#1E2E44"/><path d="M3.2 5.6 L5.4 8.3 L9.6 3.6" stroke="#21982A" stroke-width="2.3" fill="none"/></svg>
<div style="left:11px;top:378px;width:11px;height:1px;background:#000;"></div>
<div style="left:24px;top:378px;width:69px;height:1px;background:#000;"></div>
<div style="left:25px;top:362.84px;width:69px;height:16px;overflow:hidden;"><div style="left:0;top:2px;font-size:12px;line-height:12px;white-space:nowrap;color:#000;transform:scaleX(0.9);transform-origin:0 0;-webkit-text-stroke:0.18px currentColor;">2006-P43</div></div>
<div style="left:96px;top:378px;width:99px;height:1px;background:#000;"></div>
<div style="left:97px;top:362.84px;width:99px;height:16px;overflow:hidden;"><div style="left:0;top:2px;font-size:12px;line-height:12px;white-space:nowrap;color:#000;transform:scaleX(0.9);transform-origin:0 0;-webkit-text-stroke:0.18px currentColor;">LOAD</div></div>
<div style="left:198px;top:378px;width:98px;height:1px;background:#000;"></div>
<div style="left:199px;top:362.84px;width:98px;height:16px;overflow:hidden;"><div style="left:0;top:2px;font-size:12px;line-height:12px;white-space:nowrap;color:#000;transform:scaleX(0.9);transform-origin:0 0;-webkit-text-stroke:0.18px currentColor;">TSTD</div></div>
<div style="left:299px;top:378px;width:73px;height:1px;background:#000;"></div>
<div style="left:300px;top:362.84px;width:73px;height:16px;overflow:hidden;"><div style="left:0;top:2px;font-size:12px;line-height:12px;white-space:nowrap;color:#000;transform:scaleX(0.9);transform-origin:0 0;-webkit-text-stroke:0.18px currentColor;">REGULAR</div></div>
<div style="left:375px;top:378px;width:80px;height:1px;background:#000;"></div>
<div style="left:376px;top:362.84px;width:80px;height:16px;overflow:hidden;"><div style="left:0;top:2px;font-size:12px;line-height:12px;white-space:nowrap;color:#000;transform:scaleX(0.9);transform-origin:0 0;-webkit-text-stroke:0.18px currentColor;">GENERATED</div></div>
<div style="left:458px;top:378px;width:75px;height:1px;background:#000;"></div>
<div style="left:459px;top:362.84px;width:75px;height:16px;overflow:hidden;"><div style="left:0;top:2px;font-size:12px;line-height:12px;white-space:nowrap;color:#000;transform:scaleX(0.9);transform-origin:0 0;-webkit-text-stroke:0.18px currentColor;">11<span style="padding:0 0.7px">/</span>10<span style="padding:0 0.7px">/</span>2005</div></div>
<div style="left:536px;top:378px;width:109px;height:1px;background:#000;"></div>
<div style="left:537px;top:362.84px;width:109px;height:16px;overflow:hidden;"><div style="left:0;top:2px;font-size:12px;line-height:12px;white-space:nowrap;color:#000;transform:scaleX(0.9);transform-origin:0 0;-webkit-text-stroke:0.18px currentColor;">11<span style="padding:0 0.7px">/</span>10<span style="padding:0 0.7px">/</span>2005 11:59:59 PM</div></div>
<div style="left:648px;top:378px;width:45px;height:1px;background:#000;"></div>
<div style="left:696px;top:378px;width:105px;height:1px;background:#000;"></div>
<svg style="position:absolute;left:664px;top:364px" width="13" height="13" viewBox="0 0 13 13"><rect x="0.5" y="0.5" width="12" height="12" fill="url(#cbg)" stroke="#1E2E44"/><path d="M3.2 5.6 L5.4 8.3 L9.6 3.6" stroke="#21982A" stroke-width="2.3" fill="none"/></svg>
<div style="left:11px;top:395px;width:11px;height:1px;background:#000;"></div>
<div style="left:24px;top:395px;width:69px;height:1px;background:#000;"></div>
<div style="left:25px;top:379.84px;width:69px;height:16px;overflow:hidden;"><div style="left:0;top:2px;font-size:12px;line-height:12px;white-space:nowrap;color:#000;transform:scaleX(0.9);transform-origin:0 0;-webkit-text-stroke:0.18px currentColor;">2007-P10</div></div>
<div style="left:96px;top:395px;width:99px;height:1px;background:#000;"></div>
<div style="left:97px;top:379.84px;width:99px;height:16px;overflow:hidden;"><div style="left:0;top:2px;font-size:12px;line-height:12px;white-space:nowrap;color:#000;transform:scaleX(0.9);transform-origin:0 0;-webkit-text-stroke:0.18px currentColor;">LOAD</div></div>
<div style="left:198px;top:395px;width:98px;height:1px;background:#000;"></div>
<div style="left:199px;top:379.84px;width:98px;height:16px;overflow:hidden;"><div style="left:0;top:2px;font-size:12px;line-height:12px;white-space:nowrap;color:#000;transform:scaleX(0.9);transform-origin:0 0;-webkit-text-stroke:0.18px currentColor;">B12345FEE</div></div>
<div style="left:299px;top:395px;width:73px;height:1px;background:#000;"></div>
<div style="left:300px;top:379.84px;width:73px;height:16px;overflow:hidden;"><div style="left:0;top:2px;font-size:12px;line-height:12px;white-space:nowrap;color:#000;transform:scaleX(0.9);transform-origin:0 0;-webkit-text-stroke:0.18px currentColor;">REGULAR</div></div>
<div style="left:375px;top:395px;width:80px;height:1px;background:#000;"></div>
<div style="left:376px;top:379.84px;width:80px;height:16px;overflow:hidden;"><div style="left:0;top:2px;font-size:12px;line-height:12px;white-space:nowrap;color:#000;transform:scaleX(0.9);transform-origin:0 0;-webkit-text-stroke:0.18px currentColor;">GENERATED</div></div>
<div style="left:458px;top:395px;width:75px;height:1px;background:#000;"></div>
<div style="left:459px;top:379.84px;width:75px;height:16px;overflow:hidden;"><div style="left:0;top:2px;font-size:12px;line-height:12px;white-space:nowrap;color:#000;transform:scaleX(0.9);transform-origin:0 0;-webkit-text-stroke:0.18px currentColor;">3<span style="padding:0 0.7px">/</span>21<span style="padding:0 0.7px">/</span>2007</div></div>
<div style="left:536px;top:395px;width:109px;height:1px;background:#000;"></div>
<div style="left:537px;top:379.84px;width:109px;height:16px;overflow:hidden;"><div style="left:0;top:2px;font-size:12px;line-height:12px;white-space:nowrap;color:#000;transform:scaleX(0.9);transform-origin:0 0;-webkit-text-stroke:0.18px currentColor;">3<span style="padding:0 0.7px">/</span>27<span style="padding:0 0.7px">/</span>2007 11:59:59 PM</div></div>
<div style="left:648px;top:395px;width:45px;height:1px;background:#000;"></div>
<div style="left:696px;top:395px;width:105px;height:1px;background:#000;"></div>
<svg style="position:absolute;left:664px;top:381px" width="13" height="13" viewBox="0 0 13 13"><rect x="0.5" y="0.5" width="12" height="12" fill="url(#cbg)" stroke="#1E2E44"/><path d="M3.2 5.6 L5.4 8.3 L9.6 3.6" stroke="#21982A" stroke-width="2.3" fill="none"/></svg>
<div style="left:11px;top:412px;width:11px;height:1px;background:#000;"></div>
<div style="left:24px;top:412px;width:69px;height:1px;background:#000;"></div>
<div style="left:25px;top:396.84px;width:69px;height:16px;overflow:hidden;"><div style="left:0;top:2px;font-size:12px;line-height:12px;white-space:nowrap;color:#000;transform:scaleX(0.9);transform-origin:0 0;-webkit-text-stroke:0.18px currentColor;">2007-P10</div></div>
<div style="left:96px;top:412px;width:99px;height:1px;background:#000;"></div>
<div style="left:97px;top:396.84px;width:99px;height:16px;overflow:hidden;"><div style="left:0;top:2px;font-size:12px;line-height:12px;white-space:nowrap;color:#000;transform:scaleX(0.9);transform-origin:0 0;-webkit-text-stroke:0.18px currentColor;">LOAD</div></div>
<div style="left:198px;top:412px;width:98px;height:1px;background:#000;"></div>
<div style="left:199px;top:396.84px;width:98px;height:16px;overflow:hidden;"><div style="left:0;top:2px;font-size:12px;line-height:12px;white-space:nowrap;color:#000;transform:scaleX(0.9);transform-origin:0 0;-webkit-text-stroke:0.18px currentColor;">B12345RB<span style="position:relative;top:-1px">_</span>ADJ1</div></div>
<div style="left:299px;top:412px;width:73px;height:1px;background:#000;"></div>
<div style="left:300px;top:396.84px;width:73px;height:16px;overflow:hidden;"><div style="left:0;top:2px;font-size:12px;line-height:12px;white-space:nowrap;color:#000;transform:scaleX(0.9);transform-origin:0 0;-webkit-text-stroke:0.18px currentColor;">REGULAR</div></div>
<div style="left:375px;top:412px;width:80px;height:1px;background:#000;"></div>
<div style="left:376px;top:396.84px;width:80px;height:16px;overflow:hidden;"><div style="left:0;top:2px;font-size:12px;line-height:12px;white-space:nowrap;color:#000;transform:scaleX(0.9);transform-origin:0 0;-webkit-text-stroke:0.18px currentColor;">GENERATED</div></div>
<div style="left:458px;top:412px;width:75px;height:1px;background:#000;"></div>
<div style="left:459px;top:396.84px;width:75px;height:16px;overflow:hidden;"><div style="left:0;top:2px;font-size:12px;line-height:12px;white-space:nowrap;color:#000;transform:scaleX(0.9);transform-origin:0 0;-webkit-text-stroke:0.18px currentColor;">3<span style="padding:0 0.7px">/</span>21<span style="padding:0 0.7px">/</span>2007</div></div>
<div style="left:536px;top:412px;width:109px;height:1px;background:#000;"></div>
<div style="left:537px;top:396.84px;width:109px;height:16px;overflow:hidden;"><div style="left:0;top:2px;font-size:12px;line-height:12px;white-space:nowrap;color:#000;transform:scaleX(0.9);transform-origin:0 0;-webkit-text-stroke:0.18px currentColor;">3<span style="padding:0 0.7px">/</span>27<span style="padding:0 0.7px">/</span>2007 11:59:59 PM</div></div>
<div style="left:648px;top:412px;width:45px;height:1px;background:#000;"></div>
<div style="left:696px;top:412px;width:105px;height:1px;background:#000;"></div>
<svg style="position:absolute;left:664px;top:398px" width="13" height="13" viewBox="0 0 13 13"><rect x="0.5" y="0.5" width="12" height="12" fill="url(#cbg)" stroke="#1E2E44"/><path d="M3.2 5.6 L5.4 8.3 L9.6 3.6" stroke="#21982A" stroke-width="2.3" fill="none"/></svg>
<div style="left:11px;top:429px;width:11px;height:1px;background:#000;"></div>
<div style="left:24px;top:429px;width:69px;height:1px;background:#000;"></div>
<div style="left:25px;top:413.84px;width:69px;height:16px;overflow:hidden;"><div style="left:0;top:2px;font-size:12px;line-height:12px;white-space:nowrap;color:#000;transform:scaleX(0.9);transform-origin:0 0;-webkit-text-stroke:0.18px currentColor;">2007-P10</div></div>
<div style="left:96px;top:429px;width:99px;height:1px;background:#000;"></div>
<div style="left:97px;top:413.84px;width:99px;height:16px;overflow:hidden;"><div style="left:0;top:2px;font-size:12px;line-height:12px;white-space:nowrap;color:#000;transform:scaleX(0.9);transform-origin:0 0;-webkit-text-stroke:0.18px currentColor;">LOAD</div></div>
<div style="left:198px;top:429px;width:98px;height:1px;background:#000;"></div>
<div style="left:199px;top:413.84px;width:98px;height:16px;overflow:hidden;"><div style="left:0;top:2px;font-size:12px;line-height:12px;white-space:nowrap;color:#000;transform:scaleX(0.9);transform-origin:0 0;-webkit-text-stroke:0.18px currentColor;">B12345RB<span style="position:relative;top:-1px">_</span>ADJ2</div></div>
<div style="left:299px;top:429px;width:73px;height:1px;background:#000;"></div>
<div style="left:300px;top:413.84px;width:73px;height:16px;overflow:hidden;"><div style="left:0;top:2px;font-size:12px;line-height:12px;white-space:nowrap;color:#000;transform:scaleX(0.9);transform-origin:0 0;-webkit-text-stroke:0.18px currentColor;">REGULAR</div></div>
<div style="left:375px;top:429px;width:80px;height:1px;background:#000;"></div>
<div style="left:376px;top:413.84px;width:80px;height:16px;overflow:hidden;"><div style="left:0;top:2px;font-size:12px;line-height:12px;white-space:nowrap;color:#000;transform:scaleX(0.9);transform-origin:0 0;-webkit-text-stroke:0.18px currentColor;">GENERATED</div></div>
<div style="left:458px;top:429px;width:75px;height:1px;background:#000;"></div>
<div style="left:459px;top:413.84px;width:75px;height:16px;overflow:hidden;"><div style="left:0;top:2px;font-size:12px;line-height:12px;white-space:nowrap;color:#000;transform:scaleX(0.9);transform-origin:0 0;-webkit-text-stroke:0.18px currentColor;">3<span style="padding:0 0.7px">/</span>21<span style="padding:0 0.7px">/</span>2007</div></div>
<div style="left:536px;top:429px;width:109px;height:1px;background:#000;"></div>
<div style="left:537px;top:413.84px;width:109px;height:16px;overflow:hidden;"><div style="left:0;top:2px;font-size:12px;line-height:12px;white-space:nowrap;color:#000;transform:scaleX(0.9);transform-origin:0 0;-webkit-text-stroke:0.18px currentColor;">3<span style="padding:0 0.7px">/</span>27<span style="padding:0 0.7px">/</span>2007 11:59:59 PM</div></div>
<div style="left:648px;top:429px;width:45px;height:1px;background:#000;"></div>
<div style="left:696px;top:429px;width:105px;height:1px;background:#000;"></div>
<svg style="position:absolute;left:664px;top:415px" width="13" height="13" viewBox="0 0 13 13"><rect x="0.5" y="0.5" width="12" height="12" fill="url(#cbg)" stroke="#1E2E44"/><path d="M3.2 5.6 L5.4 8.3 L9.6 3.6" stroke="#21982A" stroke-width="2.3" fill="none"/></svg>
<div style="left:11px;top:446px;width:11px;height:1px;background:#000;"></div>
<div style="left:24px;top:446px;width:69px;height:1px;background:#000;"></div>
<div style="left:25px;top:430.84px;width:69px;height:16px;overflow:hidden;"><div style="left:0;top:2px;font-size:12px;line-height:12px;white-space:nowrap;color:#000;transform:scaleX(0.9);transform-origin:0 0;-webkit-text-stroke:0.18px currentColor;">2007-P10</div></div>
<div style="left:96px;top:446px;width:99px;height:1px;background:#000;"></div>
<div style="left:97px;top:430.84px;width:99px;height:16px;overflow:hidden;"><div style="left:0;top:2px;font-size:12px;line-height:12px;white-space:nowrap;color:#000;transform:scaleX(0.9);transform-origin:0 0;-webkit-text-stroke:0.18px currentColor;">MISC</div></div>
<div style="left:198px;top:446px;width:98px;height:1px;background:#000;"></div>
<div style="left:199px;top:430.84px;width:98px;height:16px;overflow:hidden;"><div style="left:0;top:2px;font-size:12px;line-height:12px;white-space:nowrap;color:#000;transform:scaleX(0.9);transform-origin:0 0;-webkit-text-stroke:0.18px currentColor;">MISC<span style="position:relative;top:-1px">_</span>2007-P10</div></div>
<div style="left:299px;top:446px;width:73px;height:1px;background:#000;"></div>
<div style="left:300px;top:430.84px;width:73px;height:16px;overflow:hidden;"><div style="left:0;top:2px;font-size:12px;line-height:12px;white-space:nowrap;color:#000;transform:scaleX(0.9);transform-origin:0 0;-webkit-text-stroke:0.18px currentColor;">MISC</div></div>
<div style="left:375px;top:446px;width:80px;height:1px;background:#000;"></div>
<div style="left:376px;top:430.84px;width:80px;height:16px;overflow:hidden;"><div style="left:0;top:2px;font-size:12px;line-height:12px;white-space:nowrap;color:#000;transform:scaleX(0.9);transform-origin:0 0;-webkit-text-stroke:0.18px currentColor;">GENERATED</div></div>
<div style="left:458px;top:446px;width:75px;height:1px;background:#000;"></div>
<div style="left:459px;top:430.84px;width:75px;height:16px;overflow:hidden;"><div style="left:0;top:2px;font-size:12px;line-height:12px;white-space:nowrap;color:#000;transform:scaleX(0.9);transform-origin:0 0;-webkit-text-stroke:0.18px currentColor;">3<span style="padding:0 0.7px">/</span>21<span style="padding:0 0.7px">/</span>2007</div></div>
<div style="left:536px;top:446px;width:109px;height:1px;background:#000;"></div>
<div style="left:537px;top:430.84px;width:109px;height:16px;overflow:hidden;"><div style="left:0;top:2px;font-size:12px;line-height:12px;white-space:nowrap;color:#000;transform:scaleX(0.9);transform-origin:0 0;-webkit-text-stroke:0.18px currentColor;">3<span style="padding:0 0.7px">/</span>27<span style="padding:0 0.7px">/</span>2007 11:59:59 PM</div></div>
<div style="left:648px;top:446px;width:45px;height:1px;background:#000;"></div>
<div style="left:696px;top:446px;width:105px;height:1px;background:#000;"></div>
<svg style="position:absolute;left:664px;top:432px" width="13" height="13" viewBox="0 0 13 13"><rect x="0.5" y="0.5" width="12" height="12" fill="url(#cbg)" stroke="#1E2E44"/><path d="M3.2 5.6 L5.4 8.3 L9.6 3.6" stroke="#21982A" stroke-width="2.3" fill="none"/></svg>
<div style="left:11px;top:463px;width:11px;height:1px;background:#000;"></div>
<div style="left:24px;top:463px;width:69px;height:1px;background:#000;"></div>
<div style="left:25px;top:447.84px;width:69px;height:16px;overflow:hidden;"><div style="left:0;top:2px;font-size:12px;line-height:12px;white-space:nowrap;color:#000;transform:scaleX(0.9);transform-origin:0 0;-webkit-text-stroke:0.18px currentColor;">2007-P10</div></div>
<div style="left:96px;top:463px;width:99px;height:1px;background:#000;"></div>
<div style="left:97px;top:447.84px;width:99px;height:16px;overflow:hidden;"><div style="left:0;top:2px;font-size:12px;line-height:12px;white-space:nowrap;color:#000;transform:scaleX(0.9);transform-origin:0 0;-webkit-text-stroke:0.18px currentColor;">LOAD</div></div>
<div style="left:198px;top:463px;width:98px;height:1px;background:#000;"></div>
<div style="left:199px;top:447.84px;width:98px;height:16px;overflow:hidden;"><div style="left:0;top:2px;font-size:12px;line-height:12px;white-space:nowrap;color:#000;transform:scaleX(0.9);transform-origin:0 0;-webkit-text-stroke:0.18px currentColor;">B12345YARD-P10</div></div>
<div style="left:299px;top:463px;width:73px;height:1px;background:#000;"></div>
<div style="left:300px;top:447.84px;width:73px;height:16px;overflow:hidden;"><div style="left:0;top:2px;font-size:12px;line-height:12px;white-space:nowrap;color:#000;transform:scaleX(0.9);transform-origin:0 0;-webkit-text-stroke:0.18px currentColor;">REGULAR</div></div>
<div style="left:375px;top:463px;width:80px;height:1px;background:#000;"></div>
<div style="left:376px;top:447.84px;width:80px;height:16px;overflow:hidden;"><div style="left:0;top:2px;font-size:12px;line-height:12px;white-space:nowrap;color:#000;transform:scaleX(0.9);transform-origin:0 0;-webkit-text-stroke:0.18px currentColor;">GENERATED</div></div>
<div style="left:458px;top:463px;width:75px;height:1px;background:#000;"></div>
<div style="left:459px;top:447.84px;width:75px;height:16px;overflow:hidden;"><div style="left:0;top:2px;font-size:12px;line-height:12px;white-space:nowrap;color:#000;transform:scaleX(0.9);transform-origin:0 0;-webkit-text-stroke:0.18px currentColor;">3<span style="padding:0 0.7px">/</span>21<span style="padding:0 0.7px">/</span>2007</div></div>
<div style="left:536px;top:463px;width:109px;height:1px;background:#000;"></div>
<div style="left:537px;top:447.84px;width:109px;height:16px;overflow:hidden;"><div style="left:0;top:2px;font-size:12px;line-height:12px;white-space:nowrap;color:#000;transform:scaleX(0.9);transform-origin:0 0;-webkit-text-stroke:0.18px currentColor;">3<span style="padding:0 0.7px">/</span>27<span style="padding:0 0.7px">/</span>2007 11:59:59 PM</div></div>
<div style="left:648px;top:463px;width:45px;height:1px;background:#000;"></div>
<div style="left:696px;top:463px;width:105px;height:1px;background:#000;"></div>
<svg style="position:absolute;left:664px;top:449px" width="13" height="13" viewBox="0 0 13 13"><rect x="0.5" y="0.5" width="12" height="12" fill="url(#cbg)" stroke="#1E2E44"/><path d="M3.2 5.6 L5.4 8.3 L9.6 3.6" stroke="#21982A" stroke-width="2.3" fill="none"/></svg>
<div style="left:11px;top:480px;width:11px;height:1px;background:#C9C5B8;"></div>
<div style="left:24px;top:480px;width:69px;height:1px;background:#C9C5B8;"></div>
<div style="left:25px;top:464.84px;width:69px;height:16px;overflow:hidden;"><div style="left:0;top:2px;font-size:12px;line-height:12px;white-space:nowrap;color:#000;transform:scaleX(0.9);transform-origin:0 0;-webkit-text-stroke:0.18px currentColor;">2007-P10</div></div>
<div style="left:96px;top:480px;width:99px;height:1px;background:#C9C5B8;"></div>
<div style="left:97px;top:464.84px;width:99px;height:16px;overflow:hidden;"><div style="left:0;top:2px;font-size:12px;line-height:12px;white-space:nowrap;color:#000;transform:scaleX(0.9);transform-origin:0 0;-webkit-text-stroke:0.18px currentColor;">LOAD</div></div>
<div style="left:198px;top:480px;width:98px;height:1px;background:#C9C5B8;"></div>
<div style="left:199px;top:464.84px;width:98px;height:16px;overflow:hidden;"><div style="left:0;top:2px;font-size:12px;line-height:12px;white-space:nowrap;color:#000;transform:scaleX(0.9);transform-origin:0 0;-webkit-text-stroke:0.18px currentColor;">DEMO901</div></div>
<div style="left:299px;top:480px;width:73px;height:1px;background:#C9C5B8;"></div>
<div style="left:300px;top:464.84px;width:73px;height:16px;overflow:hidden;"><div style="left:0;top:2px;font-size:12px;line-height:12px;white-space:nowrap;color:#000;transform:scaleX(0.9);transform-origin:0 0;-webkit-text-stroke:0.18px currentColor;">REGULAR</div></div>
<div style="left:375px;top:480px;width:80px;height:1px;background:#C9C5B8;"></div>
<div style="left:376px;top:464.84px;width:80px;height:16px;overflow:hidden;"><div style="left:0;top:2px;font-size:12px;line-height:12px;white-space:nowrap;color:#000;transform:scaleX(0.9);transform-origin:0 0;-webkit-text-stroke:0.18px currentColor;">GENERATED</div></div>
<div style="left:458px;top:480px;width:75px;height:1px;background:#C9C5B8;"></div>
<div style="left:459px;top:464.84px;width:75px;height:16px;overflow:hidden;"><div style="left:0;top:2px;font-size:12px;line-height:12px;white-space:nowrap;color:#000;transform:scaleX(0.9);transform-origin:0 0;-webkit-text-stroke:0.18px currentColor;">1<span style="padding:0 0.7px">/</span>1<span style="padding:0 0.7px">/</span>2007</div></div>
<div style="left:536px;top:480px;width:109px;height:1px;background:#C9C5B8;"></div>
<div style="left:537px;top:464.84px;width:109px;height:16px;overflow:hidden;"><div style="left:0;top:2px;font-size:12px;line-height:12px;white-space:nowrap;color:#000;transform:scaleX(0.9);transform-origin:0 0;-webkit-text-stroke:0.18px currentColor;">3<span style="padding:0 0.7px">/</span>21<span style="padding:0 0.7px">/</span>2007 11:59:59 PM</div></div>
<div style="left:648px;top:480px;width:45px;height:1px;background:#C9C5B8;"></div>
<div style="left:696px;top:480px;width:105px;height:1px;background:#C9C5B8;"></div>
<svg style="position:absolute;left:664px;top:466px" width="13" height="13" viewBox="0 0 13 13"><rect x="0.5" y="0.5" width="12" height="12" fill="url(#cbg)" stroke="#1E2E44"/><path d="M3.2 5.6 L5.4 8.3 L9.6 3.6" stroke="#21982A" stroke-width="2.3" fill="none"/></svg>
<div style="left:22px;top:344px;width:1px;height:137px;background:#000;"></div>
<div style="left:94px;top:344px;width:1px;height:136px;background:#A9A69A;"></div>
<div style="left:95px;top:344px;width:1px;height:136px;background:#FFFFFF;"></div>
<div style="left:196px;top:344px;width:1px;height:136px;background:#A9A69A;"></div>
<div style="left:197px;top:344px;width:1px;height:136px;background:#FFFFFF;"></div>
<div style="left:297px;top:344px;width:1px;height:136px;background:#A9A69A;"></div>
<div style="left:298px;top:344px;width:1px;height:136px;background:#FFFFFF;"></div>
<div style="left:373px;top:344px;width:1px;height:136px;background:#A9A69A;"></div>
<div style="left:374px;top:344px;width:1px;height:136px;background:#FFFFFF;"></div>
<div style="left:456px;top:344px;width:1px;height:136px;background:#A9A69A;"></div>
<div style="left:457px;top:344px;width:1px;height:136px;background:#FFFFFF;"></div>
<div style="left:534px;top:344px;width:1px;height:136px;background:#A9A69A;"></div>
<div style="left:535px;top:344px;width:1px;height:136px;background:#FFFFFF;"></div>
<div style="left:646px;top:344px;width:1px;height:136px;background:#A9A69A;"></div>
<div style="left:647px;top:344px;width:1px;height:136px;background:#FFFFFF;"></div>
<div style="left:694px;top:344px;width:1px;height:136px;background:#A9A69A;"></div>
<div style="left:695px;top:344px;width:1px;height:136px;background:#FFFFFF;"></div>
<svg style="position:absolute;left:14px;top:347px" width="7" height="11" viewBox="0 0 7 11"><path d="M0 0 L6 5.5 L0 11 Z" fill="#000"/></svg>
<svg style="position:absolute;left:374px;top:482px" width="13" height="13" viewBox="0 0 13 13"><rect x="0.5" y="0.5" width="12" height="12" fill="url(#cbg)" stroke="#1E2E44"/><path d="M3.2 5.6 L5.4 8.3 L9.6 3.6" stroke="#21982A" stroke-width="2.3" fill="none"/></svg>
<div style="left:389.8px;top:482.84px;font-size:12px;line-height:12px;font-weight:normal;color:#000;white-space:nowrap;transform:scaleX(0.9);transform-origin:0 0;-webkit-text-stroke:0.18px currentColor;">= GENERATED</div>
<div style="left:9px;top:500px;width:793px;height:30px;background:linear-gradient(#ECE9D8,#F6F5EF 45%,#FFFFFF 85%,#FFFFFF);"></div>
<div style="left:802px;top:315px;width:19px;height:197px;background:linear-gradient(90deg,#F1EFE7,#F7F6F1 70%,#FDFDFB);"></div>
<svg style="position:absolute;left:803px;top:317px" width="16" height="17" viewBox="0 0 16 17"><rect x="0.5" y="0.5" width="15" height="16" rx="2" fill="url(#sbg)" stroke="#C6D4F7"/><rect x="1" y="15.5" width="14" height="1" fill="#AFC0E8"/><path d="M4.0 10.5 L8.0 6.5 L12.0 10.5" stroke="#4D6185" stroke-width="2.2" fill="none"/></svg>
<svg style="position:absolute;left:803px;top:336px" width="16" height="20" viewBox="0 0 16 20"><rect x="0.5" y="0.5" width="15" height="19" rx="2" fill="url(#sbg)" stroke="#C6D4F7"/><rect x="1" y="18.5" width="14" height="1" fill="#AFC0E8"/><path d="M4.5 6.5h7M4.5 8.5h7M4.5 10.5h7M4.5 12.5h7" stroke="#9BB0E0"/></svg>
<svg style="position:absolute;left:803px;top:492px" width="16" height="17" viewBox="0 0 16 17"><rect x="0.5" y="0.5" width="15" height="16" rx="2" fill="url(#sbg)" stroke="#C6D4F7"/><rect x="1" y="15.5" width="14" height="1" fill="#AFC0E8"/><path d="M4.0 6.5 L8.0 10.5 L12.0 6.5" stroke="#4D6185" stroke-width="2.2" fill="none"/></svg>
<div style="left:800px;top:511px;width:21px;height:19px;background:#ECE9D8;"></div>
<svg style="position:absolute;left:11px;top:512px" width="17" height="17" viewBox="0 0 17 17"><rect x="0.5" y="0.5" width="16" height="16" rx="2" fill="url(#sbg)" stroke="#C6D4F7"/><rect x="1" y="15.5" width="15" height="1" fill="#AFC0E8"/><path d="M10.5 4.5 L6.5 8.5 L10.5 12.5" stroke="#4D6185" stroke-width="2.2" fill="none"/></svg>
<svg style="position:absolute;left:29px;top:512px" width="19" height="17" viewBox="0 0 19 17"><rect x="0.5" y="0.5" width="18" height="16" rx="2" fill="url(#sbg)" stroke="#C6D4F7"/><rect x="1" y="15.5" width="17" height="1" fill="#AFC0E8"/><path d="M6.5 5v7M8.5 5v7M10.5 5v7M12.5 5v7" stroke="#9BB0E0"/></svg>
<svg style="position:absolute;left:783px;top:512px" width="16" height="17" viewBox="0 0 16 17"><rect x="0.5" y="0.5" width="15" height="16" rx="2" fill="url(#sbg)" stroke="#C6D4F7"/><rect x="1" y="15.5" width="14" height="1" fill="#AFC0E8"/><path d="M6.0 4.5 L10.0 8.5 L6.0 12.5" stroke="#4D6185" stroke-width="2.2" fill="none"/></svg>
<div style="left:4px;top:531px;width:822px;height:22px;background:linear-gradient(#ECE9D8,#EEEBDD 60%,#E6E3D4);"></div>
<div style="left:4px;top:531px;width:822px;height:1px;background:#FFFFFF;"></div>
<div style="left:9px;top:532px;width:812px;height:1px;background:#A0A8B8;"></div>
<div style="left:4px;top:533px;width:822px;height:1px;background:#F6F6F2;"></div>
<div style="left:4px;top:534px;width:822px;height:1px;background:#B4B09C;"></div>
<div style="left:4px;top:535px;width:822px;height:1px;background:#DCD9CA;"></div>
<div style="left:240px;top:537px;width:1px;height:15px;background:#C8C4B4;"></div>
<div style="left:241px;top:537px;width:1px;height:15px;background:#FFFFFF;"></div>
<div style="left:281px;top:537px;width:1px;height:15px;background:#C8C4B4;"></div>
<div style="left:282px;top:537px;width:1px;height:15px;background:#FFFFFF;"></div>
<div style="left:324px;top:537px;width:1px;height:15px;background:#C8C4B4;"></div>
<div style="left:325px;top:537px;width:1px;height:15px;background:#FFFFFF;"></div>
<svg style="position:absolute;left:810px;top:538px" width="14" height="14" viewBox="0 0 14 14"><rect x="11" y="11" width="2" height="2" fill="#C6C2B0"/><rect x="12" y="12" width="1" height="1" fill="#FFFFFF"/><rect x="11" y="7" width="2" height="2" fill="#C6C2B0"/><rect x="12" y="8" width="1" height="1" fill="#FFFFFF"/><rect x="11" y="3" width="2" height="2" fill="#C6C2B0"/><rect x="12" y="4" width="1" height="1" fill="#FFFFFF"/><rect x="7" y="11" width="2" height="2" fill="#C6C2B0"/><rect x="8" y="12" width="1" height="1" fill="#FFFFFF"/><rect x="7" y="7" width="2" height="2" fill="#C6C2B0"/><rect x="8" y="8" width="1" height="1" fill="#FFFFFF"/><rect x="3" y="11" width="2" height="2" fill="#C6C2B0"/><rect x="4" y="12" width="1" height="1" fill="#FFFFFF"/></svg>
</body></html>
